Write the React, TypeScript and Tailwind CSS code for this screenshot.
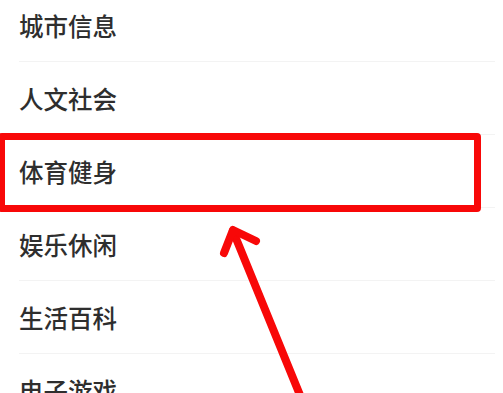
import React from "react";

const items = ["城市信息", "人文社会", "体育健身", "娱乐休闲", "生活百科", "电子游戏"];

const App = () => {
  return (
    <div className="relative w-[503px] h-[393px] overflow-hidden bg-white" style={{ fontFamily: '"Noto Sans CJK SC", "Noto Sans", sans-serif' }}>
      <div className="mt-[-11px] pl-[19px] pr-[8px]">
        {items.map((name) => (
          <div key={name} className="h-[73px] flex items-center border-b border-[#f3f3f3] text-[24.5px] font-medium text-[#2e2e2e] leading-none pt-[3px]">
            {name}
          </div>
        ))}
      </div>

      {/* annotation box */}
      <div className="absolute left-[-2px] top-[133px] w-[483px] h-[79px] border-[7px] border-[#f80808] rounded-[4px]" />

      {/* annotation arrow */}
      <svg className="absolute left-0 top-0" width="503" height="393" viewBox="0 0 503 393">
        <g stroke="#f80808" strokeWidth="8" strokeLinecap="round" strokeLinejoin="round" fill="none">
          <line x1="233" y1="231" x2="302" y2="400" />
          <polyline points="224,253 233,230 256,241" />
        </g>
      </svg>
    </div>
  );
};

export default App;
